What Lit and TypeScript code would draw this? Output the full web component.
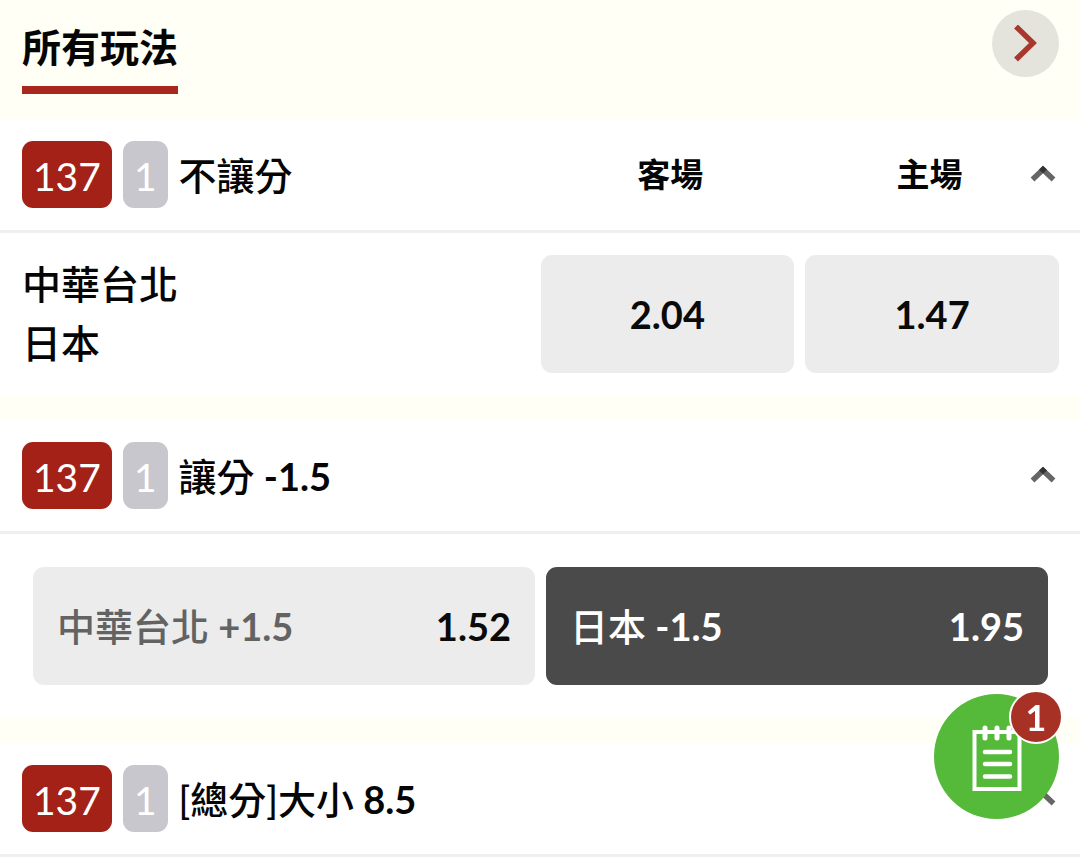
import { LitElement, html, css, nothing } from "lit";
import { customElement, property, state } from "lit/decorators.js";
import { classMap } from "lit/directives/class-map.js";

interface Pick {
  id: string;
  label: string;
  line?: string;
  odds: string;
}

interface Market {
  id: number;
  title: string;
  line?: string;
  columns?: string[];
  layout: "teams" | "lines" | "empty";
  picks: Pick[];
}

const MARKETS: Market[] = [
  {
    id: 1,
    title: "不讓分",
    columns: ["客場", "主場"],
    layout: "teams",
    picks: [
      { id: "ml-away", label: "中華台北", odds: "2.04" },
      { id: "ml-home", label: "日本", odds: "1.47" },
    ],
  },
  {
    id: 2,
    title: "讓分",
    line: "-1.5",
    layout: "lines",
    picks: [
      { id: "hc-away", label: "中華台北", line: "+1.5", odds: "1.52" },
      { id: "hc-home", label: "日本", line: "-1.5", odds: "1.95" },
    ],
  },
  { id: 3, title: "[總分]大小", line: "8.5", layout: "empty", picks: [] },
];

@customElement("market-card")
export class MarketCard extends LitElement {
  @property({ attribute: false }) market!: Market;
  @property() selected = "";
  @state() private open = true;

  static styles = css`
    :host {
      display: block;
      background: #fff;
      font-size: 38px;
    }
    button {
      font: inherit;
      color: inherit;
      border: 0;
      padding: 0;
      margin: 0;
      background: none;
      cursor: pointer;
    }
    .head {
      display: grid;
      grid-template-columns: 1fr 1fr;
      align-items: center;
      padding: 22px 21px 22px 22px;
      border-bottom: 3px solid #efeff1;
    }
    .name {
      grid-area: 1 / 1;
      display: flex;
      align-items: center;
      gap: 11px;
      white-space: nowrap;
    }
    .tag {
      padding: 3px 11px 0;
      border-radius: 11px;
      font-size: 39px;
      line-height: 64px;
      color: #fff;
      background: #c8c7cd;
    }
    .tag.code {
      background: #a32117;
    }
    .title {
      margin: 0;
      font-size: inherit;
      font-weight: 500;
    }
    .num {
      font-weight: 700;
    }
    .columns {
      grid-area: 1 / 2;
      display: grid;
      grid-template-columns: 1fr 1fr;
      text-align: center;
      font-size: 33px;
      line-height: 54px;
      padding-bottom: 2px;
      font-weight: 600;
    }
    .toggle {
      grid-area: 1 / 2;
      justify-self: end;
      display: flex;
      align-items: center;
      justify-content: center;
      width: 33px;
      height: 44px;
    }
    .toggle.closed svg {
      transform: rotate(180deg);
    }
    .teams {
      display: grid;
      grid-template-columns: 2fr 1fr 1fr;
      gap: 11px;
      padding: 22px 21px 22px 22px;
    }
    .names {
      font-size: 39px;
      line-height: 59px;
      font-weight: 500;
    }
    .odds {
      min-height: 118px;
      border-radius: 11px;
      background: #ececec;
      color: #0a0a0a;
      font-weight: 700;
    }
    .lines {
      display: grid;
      grid-template-columns: 1fr 1fr;
      gap: 11px;
      padding: 33px 32px 33px 33px;
    }
    .line {
      display: flex;
      align-items: center;
      justify-content: space-between;
      padding: 0 24px;
    }
    .label {
      color: #636363;
      font-weight: 500;
    }
    .odds.on,
    .odds.on .label {
      background: #4a4a4a;
      color: #fff;
    }
  `;

  private pick(id: string) {
    this.dispatchEvent(new CustomEvent("pick", { detail: id }));
  }

  private text(label: string, line?: string) {
    return line ? html`${label}<span class="num"> ${line}</span>` : label;
  }

  private body() {
    const { layout, picks } = this.market;
    if (!this.open || layout === "empty") return nothing;
    if (layout === "teams") {
      return html`<div class="teams">
        <div class="names">${picks.map((p) => html`<div>${p.label}</div>`)}</div>
        ${picks.map(
          (p) => html`<button
            class=${classMap({ odds: true, on: p.id === this.selected })}
            aria-pressed=${p.id === this.selected}
            @click=${() => this.pick(p.id)}
          >${p.odds}</button>`
        )}
      </div>`;
    }
    return html`<div class="lines">
      ${picks.map(
        (p) => html`<button
          class=${classMap({ odds: true, line: true, on: p.id === this.selected })}
          aria-pressed=${p.id === this.selected}
          @click=${() => this.pick(p.id)}
        ><span class="label">${this.text(p.label, p.line)}</span><span>${p.odds}</span></button>`
      )}
    </div>`;
  }

  render() {
    const m = this.market;
    return html`
      <div class="head">
        <div class="name">
          <span class="tag code">137</span>
          <span class="tag">1</span>
          <h2 class="title">${this.text(m.title, m.line)}</h2>
        </div>
        ${m.columns
          ? html`<div class="columns">${m.columns.map((c) => html`<span>${c}</span>`)}</div>`
          : nothing}
        <button
          class=${classMap({ toggle: true, closed: !this.open })}
          aria-label=${m.title}
          aria-expanded=${this.open}
          @click=${() => (this.open = !this.open)}
        >
          <svg width="26" height="20" viewBox="0 0 26 20" fill="none">
            <path d="M2.500 14.500 13 4.500 23.500 14.500" stroke="#666" stroke-width="5.500" />
            <path d="M13 .7 17 4.500 13 8.300 9 4.500Z" fill="#333" />
          </svg>
        </button>
      </div>
      ${this.body()}
    `;
  }
}

@customElement("app-root")
export class AppRoot extends LitElement {
  @state() private selected = "hc-home";

  static styles = css`
    :host {
      display: block;
      min-height: 100vh;
      background: #fffff5;
      color: #050505;
      font-family: Lato, "Noto Sans CJK TC", sans-serif;
      font-size: 39px;
      line-height: 56px;
    }
    button {
      font: inherit;
      color: inherit;
      border: 0;
      padding: 0;
      margin: 0;
      cursor: pointer;
    }
    .bar {
      display: flex;
      justify-content: space-between;
      align-items: flex-start;
      padding: 10px 21px 25px 22px;
    }
    .tab {
      padding: 9px 0 11px;
      background: none;
      border-bottom: 8px solid #a82820;
      font-weight: 600;
    }
    .next {
      display: flex;
      align-items: center;
      justify-content: center;
      width: 67px;
      height: 67px;
      border-radius: 50%;
      background: #e4e4dd;
    }
    .markets {
      display: flex;
      flex-direction: column;
      gap: 25px;
    }
    .slip {
      position: fixed;
      right: 21px;
      bottom: 38px;
      display: flex;
      align-items: center;
      justify-content: center;
      width: 125px;
      height: 125px;
      border-radius: 50%;
      background: #55b93a;
    }
    .count {
      position: absolute;
      top: -4px;
      right: -4px;
      box-sizing: border-box;
      width: 54px;
      height: 54px;
      border: 2px solid #fff;
      border-radius: 50%;
      background: #a83126;
      color: #fff;
      font-size: 36px;
      font-weight: 700;
      line-height: 50px;
      text-align: center;
    }
  `;

  render() {
    return html`
      <header class="bar">
        <button class="tab">所有玩法</button>
        <button class="next" aria-label="更多">
          <svg width="26" height="38" viewBox="0 0 26 38" fill="none">
            <path d="M3 1.500 20 18 3 34.500" stroke="#a8382e" stroke-width="5.500" />
          </svg>
        </button>
      </header>
      <main class="markets">
        ${MARKETS.map(
          (m) => html`<market-card
            .market=${m}
            .selected=${this.selected}
            @pick=${(e: CustomEvent<string>) => (this.selected = e.detail)}
          ></market-card>`
        )}
      </main>
      <button class="slip" aria-label="投注單">
        <svg width="50" height="68" viewBox="0 0 50 68" fill="none" stroke="#fff">
          <path d="M2.500 9H47.500V66H2.500Z" stroke-width="4" />
          <path d="M13 5V15M25 5V15M37 5V15" stroke-width="5" stroke-linecap="round" />
          <path d="M13 29H38M13 41H38M13 53.500H38" stroke-width="4.500" stroke-linecap="round" />
        </svg>
        <span class="count">1</span>
      </button>
    `;
  }
}
